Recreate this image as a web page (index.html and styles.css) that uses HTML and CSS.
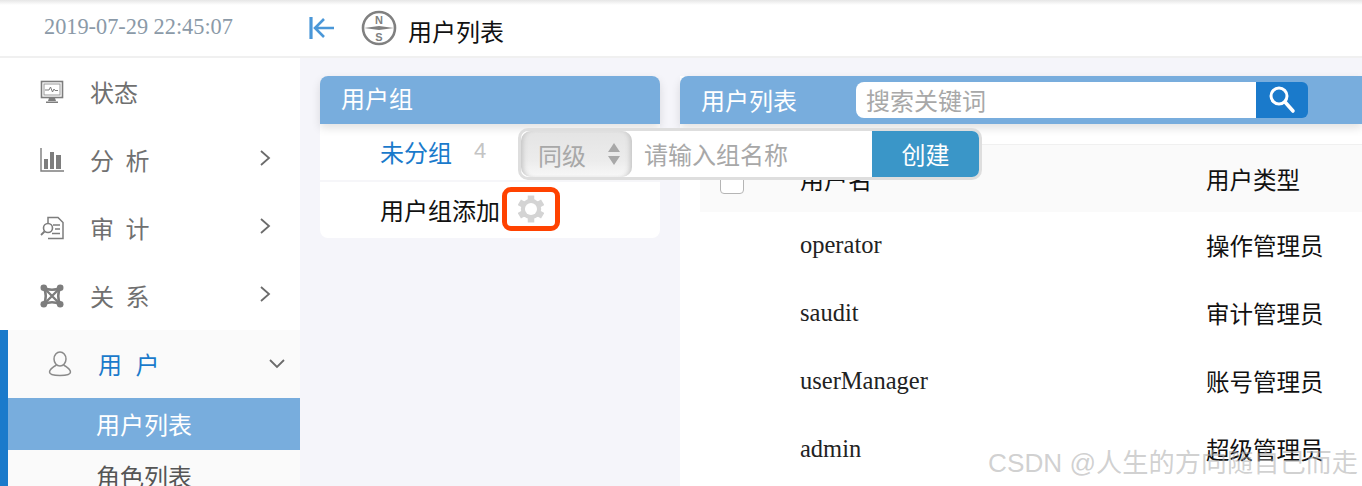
FILE: index.html
```html
<!DOCTYPE html>
<html lang="zh">
<head>
    <meta charset="UTF-8">
    <title>用户列表</title>
    <link rel="stylesheet" href="styles.css">
</head>
<body>

<!-- 顶部栏 -->
<div class="topbar">
    <div class="clock">2019-07-29 22:45:07</div>
    <svg class="collapse-icon" width="26" height="24" viewBox="0 0 26 24">
        <path d="M2 1v22" stroke="#4a97d8" stroke-width="3.200" fill="none"/>
        <path d="M15 3 6 12l9 9M6 12h19" stroke="#4a97d8" stroke-width="2.600" fill="none"/>
    </svg>
    <svg class="compass-icon" width="36" height="36" viewBox="0 0 36 36">
        <circle cx="18" cy="18" r="16" fill="#fff" stroke="#808080" stroke-width="2.600"/>
        <path d="M3 18 18 16 33 18 18 20z" fill="#808080"/>
        <text x="18" y="13.500" class="compass-letter">N</text>
        <text x="18" y="31" class="compass-letter">S</text>
    </svg>
    <div class="crumb">用户列表</div>
</div>

<div class="layout">
    <!-- 左侧菜单 -->
    <div class="sidebar">
        <div class="menu-item">
            <svg class="menu-icon" width="24" height="24" viewBox="0 0 24 24">
                <rect x="1.500" y="1.500" width="21" height="16" fill="none" stroke="#7d7d7d" stroke-width="1.600"/>
                <rect x="4" y="4" width="16" height="11" fill="none" stroke="#9a9a9a"/>
                <path d="M5 10h4l1.500-3 2 5 1.500-3 1 1.500h3" fill="none" stroke="#7d7d7d"/>
                <path d="M9 18h6l1 3H8zM6 21.500h12V23H6z" fill="#7d7d7d"/>
            </svg>
            <span class="menu-text">状态</span>
        </div>
        <div class="menu-item">
            <svg class="menu-icon" width="24" height="24" viewBox="0 0 24 24">
                <path d="M1 0v23h23" fill="none" stroke="#7d7d7d" stroke-width="1.400"/>
                <path d="M4 11h4v10H4zM10 4h4v17h-4zM16 7h5v14h-5z" fill="#7d7d7d"/>
            </svg>
            <span class="menu-text wide">分 析</span>
            <svg class="chevron" width="12" height="18" viewBox="0 0 12 18"><path d="M2 2l8 7-8 7" fill="none" stroke="#6b6b6b" stroke-width="1.800"/></svg>
        </div>
        <div class="menu-item">
            <svg class="menu-icon" width="24" height="24" viewBox="0 0 24 24">
                <path d="M8 7V1.500h10l5 5V22.500H8" fill="none" stroke="#7d7d7d" stroke-width="1.500"/>
                <path d="M13 9h7M15 13h5M12 17.500h8" stroke="#7d7d7d" stroke-width="1.500" fill="none"/>
                <circle cx="8" cy="12" r="4.500" fill="#fff" stroke="#7d7d7d" stroke-width="1.600"/>
                <path d="M4.500 15.500 1 19" stroke="#7d7d7d" stroke-width="1.800"/>
            </svg>
            <span class="menu-text wide">审 计</span>
            <svg class="chevron" width="12" height="18" viewBox="0 0 12 18"><path d="M2 2l8 7-8 7" fill="none" stroke="#6b6b6b" stroke-width="1.800"/></svg>
        </div>
        <div class="menu-item">
            <svg class="menu-icon" width="24" height="24" viewBox="0 0 24 24">
                <path d="M4 4q8 3.500 16 0-3.500 8 0 16-8-3.500-16 0 3.500-8 0-16z" fill="none" stroke="#7d7d7d" stroke-width="2.600"/>
                <path d="M4 4l16 16M20 4 4 20" stroke="#7d7d7d" stroke-width="2.400" fill="none"/>
                <circle cx="3.800" cy="3.800" r="3.300" fill="#7d7d7d"/><circle cx="20.200" cy="3.800" r="3.300" fill="#7d7d7d"/>
                <circle cx="3.800" cy="20.200" r="3.300" fill="#7d7d7d"/><circle cx="20.200" cy="20.200" r="3.300" fill="#7d7d7d"/>
            </svg>
            <span class="menu-text wide">关 系</span>
            <svg class="chevron" width="12" height="18" viewBox="0 0 12 18"><path d="M2 2l8 7-8 7" fill="none" stroke="#6b6b6b" stroke-width="1.800"/></svg>
        </div>
        <div class="menu-group">
            <div class="menu-item open">
                <svg class="menu-icon" width="24" height="26" viewBox="0 0 24 26">
                    <ellipse cx="12" cy="8" rx="6" ry="7" fill="none" stroke="#8a8a8a" stroke-width="1.500"/>
                    <path d="M8.500 14C5 16 1.500 18 1.500 21c0 3 5 3.500 10.500 3.500S22.500 24 22.500 21c0-3-3.500-5-7-7" fill="none" stroke="#8a8a8a" stroke-width="1.500"/>
                </svg>
                <span class="menu-text wide">用 户</span>
                <svg class="chevron-down" width="18" height="12" viewBox="0 0 18 12"><path d="M2 2l7 7 7-7" fill="none" stroke="#6b6b6b" stroke-width="1.800"/></svg>
            </div>
            <div class="submenu-item active">用户列表</div>
            <div class="submenu-item">角色列表</div>
        </div>
    </div>

    <!-- 内容区 -->
    <div class="content">
        <div class="group-panel">
            <div class="panel-head">用户组</div>
            <div class="group-row">
                <span class="group-name">未分组</span>
                <span class="group-count">4</span>
            </div>
            <div class="group-row">
                <span class="group-add">用户组添加</span>
                <span class="gear-box">
                    <svg width="26" height="28" viewBox="0 0 28 30" fill="#d4d4d4">
                        <circle cx="14" cy="15" r="11"/>
                        <rect x="10.500" y="0.500" width="7" height="6"/>
                        <rect x="10.500" y="0.500" width="7" height="6" transform="rotate(60 14 15)"/>
                        <rect x="10.500" y="0.500" width="7" height="6" transform="rotate(120 14 15)"/>
                        <rect x="10.500" y="0.500" width="7" height="6" transform="rotate(180 14 15)"/>
                        <rect x="10.500" y="0.500" width="7" height="6" transform="rotate(240 14 15)"/>
                        <rect x="10.500" y="0.500" width="7" height="6" transform="rotate(300 14 15)"/>
                        <circle cx="14" cy="15" r="6.500" fill="#fff"/>
                    </svg>
                </span>
            </div>
        </div>

        <div class="list-panel">
            <div class="panel-head list-head">
                <span class="list-title">用户列表</span>
                <div class="search">
                    <div class="search-input">搜索关键词</div>
                    <div class="search-btn">
                        <svg width="30" height="30" viewBox="0 0 30 30">
                            <circle cx="12" cy="11" r="8" fill="none" stroke="#fff" stroke-width="3"/>
                            <path d="M18 17l8 9" stroke="#fff" stroke-width="3.600" stroke-linecap="round"/>
                        </svg>
                    </div>
                </div>
            </div>
            <div class="table-wrap">
                <div class="table-row table-header">
                    <span class="check"></span>
                    <span class="col-name">用户名</span>
                    <span class="col-type">用户类型</span>
                </div>
                <div class="table-row"><span class="col-name">operator</span><span class="col-type">操作管理员</span></div>
                <div class="table-row"><span class="col-name">saudit</span><span class="col-type">审计管理员</span></div>
                <div class="table-row"><span class="col-name">userManager</span><span class="col-type">账号管理员</span></div>
                <div class="table-row"><span class="col-name">admin</span><span class="col-type">超级管理员</span></div>
            </div>
        </div>
    </div>
</div>

<!-- 添加用户组弹层 -->
<div class="popover">
    <div class="level-select">
        <span>同级</span>
        <svg width="14" height="24" viewBox="0 0 14 24"><path d="M7 1l6 9H1zM7 23l6-9H1z" fill="#a8a8a8"/></svg>
    </div>
    <div class="name-input">请输入组名称</div>
    <div class="create-btn">创建</div>
</div>

<div class="watermark">CSDN @人生的方向随自己而走</div>

</body>
</html>
```

FILE: styles.css
```css
html, body {
    margin: 0;
    padding: 0;
    height: 486px;
    overflow: hidden;
}

body {
    font-family: "Liberation Serif", "Noto Sans CJK SC", serif;
    background-color: #f5f5fa;
    color: #111;
}

.topbar {
    display: flex;
    align-items: center;
    height: 55px;
    padding-top: 1px;
    background: linear-gradient(#e6e6e6, #ffffff 5px);
    border-bottom: 2px solid #f0f0f0;
}

.clock {
    width: 265px;
    padding-left: 44px;
    margin-top: -4px;
    box-sizing: border-box;
    font-family: "Liberation Serif", serif;
    font-size: 22.3px;
    color: #8b9aa8;
    white-space: nowrap;
}

.collapse-icon {
    margin-left: 44px;
    margin-top: -2px;
}

.compass-icon {
    margin-left: 26px;
    margin-top: -2px;
}

.compass-letter {
    font-family: "Liberation Sans", sans-serif;
    font-size: 11px;
    font-weight: bold;
    text-anchor: middle;
    fill: #808080;
}

.crumb {
    margin-left: 11px;
    margin-top: 4px;
    font-family: "Noto Sans CJK SC", sans-serif;
    font-size: 24px;
    color: #111;
}

.layout {
    display: flex;
    height: 429px;
}

.sidebar {
    width: 300px;
    flex-shrink: 0;
    background-color: #fff;
    overflow: hidden;
    font-family: "Noto Sans CJK SC", sans-serif;
}

.menu-item {
    display: flex;
    align-items: center;
    height: 68px;
    padding-left: 40px;
    box-sizing: border-box;
}

.menu-text {
    margin-left: 26px;
    margin-top: -2px;
    font-size: 24px;
    color: #707070;
}

.menu-text.wide {
    word-spacing: 6px;
}

.chevron {
    margin-left: auto;
    margin-right: 29px;
    margin-top: -4px;
}

.menu-group {
    background-color: #fafafa;
    border-left: 8px solid #1a7acb;
}

.menu-item.open .menu-text {
    color: #1a7acb;
    margin-left: 26px;
    word-spacing: 8px;
}

.chevron-down {
    margin-left: auto;
    margin-right: 14px;
}

.submenu-item {
    height: 52px;
    line-height: 52px;
    padding-left: 88px;
    font-size: 24px;
    color: #555;
}

.submenu-item.active {
    background-color: #78addd;
    color: #fff;
}

.content {
    flex: 1;
    display: flex;
    gap: 20px;
    padding: 18px 0 0 20px;
    min-width: 0;
    font-family: "Noto Sans CJK SC", sans-serif;
}

.group-panel {
    width: 340px;
    height: 162px;
    flex-shrink: 0;
    background-color: #fff;
    border-radius: 8px;
}

.panel-head {
    height: 48px;
    line-height: 44px;
    padding-left: 21px;
    background-color: #78addd;
    color: #fff;
    font-size: 24px;
    border-radius: 8px 8px 0 0;
    box-shadow: 0 4px 10px rgba(0, 0, 0, 0.12);
    position: relative;
}

.group-row {
    display: flex;
    align-items: center;
    height: 58px;
    padding-left: 60px;
    padding-bottom: 2px;
    box-sizing: border-box;
    border-bottom: 2px solid #f6f6f9;
    font-size: 24px;
}

.group-row:last-child {
    height: 56px;
    border-bottom: none;
}

.group-name {
    color: #1a7acb;
}

.group-count {
    margin-left: 22px;
    color: #c4c4c4;
    font-family: "Liberation Sans", sans-serif;
    font-size: 22px;
}

.group-add {
    color: #111;
}

.gear-box {
    display: flex;
    align-items: center;
    justify-content: center;
    width: 58px;
    height: 44px;
    margin-left: 2px;
    box-sizing: border-box;
    border: 5px solid #ff4200;
    border-radius: 9px;
}

.list-panel {
    flex: 1;
    min-width: 0;
    background-color: #fff;
}

.list-head {
    display: flex;
    align-items: center;
    border-radius: 8px 0 0 0;
}

.list-title {
    width: 155px;
    flex-shrink: 0;
}

.search {
    display: flex;
    width: 452px;
    height: 36px;
}

.search-input {
    flex: 1;
    line-height: 36px;
    padding-left: 10px;
    background-color: #fff;
    color: #a8a8a8;
    border-radius: 8px 0 0 8px;
}

.search-btn {
    display: flex;
    align-items: center;
    justify-content: center;
    width: 52px;
    background-color: #1a7acb;
    border-radius: 0 6px 6px 0;
}

.table-wrap {
    margin-top: 20px;
    padding-left: 20px;
    border-top: 1px solid #f0f0f0;
}

.table-row {
    display: flex;
    align-items: center;
    height: 68px;
    padding-left: 100px;
    position: relative;
}

.table-header {
    height: 67px;
    background-color: #fafafa;
}

.table-row + .table-row {
    top: -1px;
}

.check {
    position: absolute;
    left: 20px;
    top: 25px;
    width: 24px;
    height: 24px;
    box-sizing: border-box;
    background-color: #fff;
    border: 1px solid #b5b5b5;
    border-radius: 4px;
}

.col-name {
    width: 406px;
    flex-shrink: 0;
    font-family: "Liberation Serif", serif;
    font-size: 24.5px;
    color: #222;
}

.table-header .col-name {
    font-family: "Noto Sans CJK SC", sans-serif;
    font-size: 24px;
    color: #111;
}

.col-type {
    font-size: 23.5px;
    color: #111;
}

.popover {
    position: absolute;
    left: 518px;
    top: 128px;
    display: flex;
    width: 464px;
    height: 52px;
    box-sizing: border-box;
    border: 3px solid #dedede;
    border-radius: 10px;
    background-color: #fff;
    overflow: hidden;
    font-family: "Noto Sans CJK SC", sans-serif;
    font-size: 24px;
}

.level-select {
    display: flex;
    align-items: center;
    justify-content: space-between;
    width: 111px;
    padding: 0 11px 0 17px;
    box-sizing: border-box;
    border-radius: 10px;
    background: linear-gradient(#e4e4e4, #ececec 65%, #f8f8f8);
    box-shadow: inset 5px 0 5px -3px #c4c4c4, inset -5px 0 5px -3px #c4c4c4;
    color: #a8a8a8;
}

.name-input {
    width: 240px;
    line-height: 46px;
    padding-left: 12px;
    box-sizing: border-box;
    color: #a8a8a8;
}

.create-btn {
    flex: 1;
    line-height: 46px;
    text-align: center;
    background-color: #3a96c8;
    color: #fff;
}

.watermark {
    position: absolute;
    right: 4px;
    top: 442px;
    font-family: "Liberation Sans", "Noto Sans CJK SC", sans-serif;
    font-size: 26.2px;
    color: rgba(170, 170, 170, 0.55);
    white-space: nowrap;
}
```
